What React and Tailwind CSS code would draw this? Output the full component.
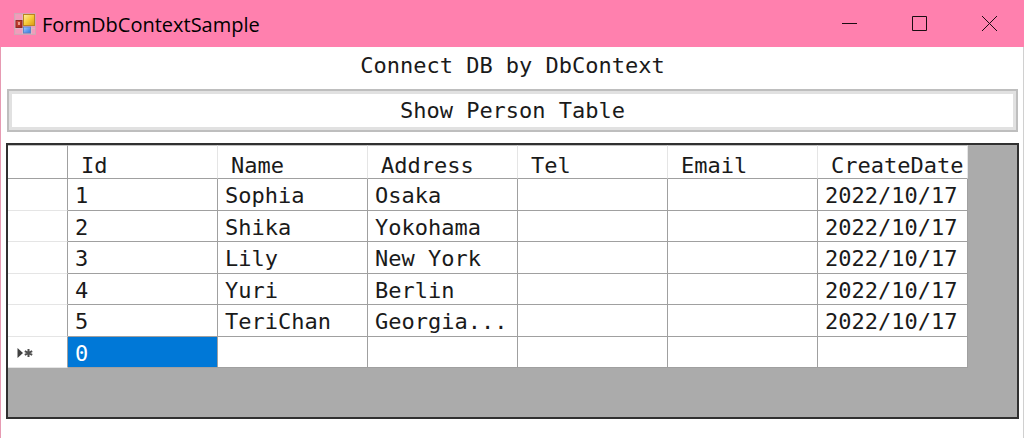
const columns = ["Id", "Name", "Address", "Tel", "Email", "CreateDate"];

const people = [
  ["1", "Sophia", "Osaka", "", "", "2022/10/17"],
  ["2", "Shika", "Yokohama", "", "", "2022/10/17"],
  ["3", "Lily", "New York", "", "", "2022/10/17"],
  ["4", "Yuri", "Berlin", "", "", "2022/10/17"],
  ["5", "TeriChan", "Georgia...", "", "", "2022/10/17"],
];

function FormIcon() {
  return (
    <svg width="22" height="22" viewBox="0 0 22 22" aria-hidden="true">
      <defs>
        <linearGradient id="gold" x1="0" y1="0" x2="1" y2="1">
          <stop offset="0" stopColor="#fff0a0" />
          <stop offset="0.5" stopColor="#f7cb3c" />
          <stop offset="1" stopColor="#d99a10" />
        </linearGradient>
        <linearGradient id="brick" x1="0" y1="0" x2="1" y2="1">
          <stop offset="0" stopColor="#d8503c" />
          <stop offset="1" stopColor="#9c2018" />
        </linearGradient>
        <linearGradient id="sky" x1="0" y1="0" x2="1" y2="1">
          <stop offset="0" stopColor="#a4ccff" />
          <stop offset="1" stopColor="#2f74dc" />
        </linearGradient>
      </defs>
      <rect x="0.5" y="0.5" width="21" height="21" fill="#e6a3ba" stroke="#d3a5b4" />
      <path d="M2 2h6v4H2zM2 16h6v4H2zM18 14h3v6h-3z" fill="#f49abb" />
      <path d="M8.5 1v20M1 15.5h20M1 7.5h8M17.500 14v7" stroke="#dcb6c4" fill="none" />
      <rect x="9.500" y="1.500" width="11" height="11" fill="url(#gold)" stroke="#bb8420" />
      <rect x="2" y="7.500" width="6" height="7" fill="url(#brick)" stroke="#8e2a25" />
      <rect x="4" y="9" width="2" height="3" fill="#e99a88" />
      <rect x="9.500" y="14" width="7" height="6" fill="url(#sky)" stroke="#5f86c6" />
    </svg>
  );
}

function TitleBar() {
  return (
    <header className="flex h-[47px] shrink-0 items-center bg-[#ff80ae] pl-3.5 text-black">
      <FormIcon />
      <h1 className="ml-1.5 flex-1 pt-0.5 font-['Open_Sans',sans-serif] text-xl">FormDbContextSample</h1>
      <div className="flex h-full">
        <button type="button" aria-label="Minimize" className="flex w-[70px] items-center justify-center">
          <svg width="15" height="15" viewBox="0 0 15 15" stroke="#1a0c12" fill="none">
            <path d="M0 7.500h15" />
          </svg>
        </button>
        <button type="button" aria-label="Maximize" className="flex w-[70px] items-center justify-center">
          <svg width="15" height="15" viewBox="0 0 15 15" stroke="#1a0c12" fill="none">
            <path d="M.5.5h14v14H.5z" />
          </svg>
        </button>
        <button type="button" aria-label="Close" className="flex w-[70px] items-center justify-center">
          <svg width="15" height="15" viewBox="0 0 15 15" stroke="#1a0c12" fill="none">
            <path d="M0 0l15 15M15 0L0 15" />
          </svg>
        </button>
      </div>
    </header>
  );
}

function RowHeader({ children }) {
  return (
    <th scope="row" className="border-r border-b border-r-[#a0a0a0] border-b-[#e5e5e5] bg-white pt-0.5 pl-2">
      {children}
    </th>
  );
}

function PersonTable() {
  return (
    <table className="w-[960px] table-fixed border-separate border-spacing-0 bg-white text-left leading-6">
      <colgroup>
        <col className="w-[60px]" />
        {columns.map((name) => (
          <col key={name} className="w-[150px]" />
        ))}
      </colgroup>
      <thead>
        <tr className="h-[34px]">
          <td className="border-t border-r border-b border-t-[#c0c0c0] border-r-[#a0a0a0] border-b-[#a0a0a0]" />
          {columns.map((name) => (
            <th
              key={name}
              scope="col"
              className="border-t border-r border-b border-t-[#c0c0c0] border-r-[#e5e5e5] border-b-[#a0a0a0] pt-2 pl-[13px] font-normal whitespace-nowrap"
            >
              {name}
            </th>
          ))}
        </tr>
      </thead>
      <tbody>
        {people.map((person) => (
          <tr key={person[0]} className="odd:h-8 even:h-[31px]">
            <RowHeader />
            {person.map((value, i) => (
              <td key={columns[i]} className="border-r border-b border-[#a0a0a0] pt-[3px] pl-[7px] whitespace-nowrap">
                {value}
              </td>
            ))}
          </tr>
        ))}
        <tr className="h-[31px]">
          <RowHeader>
            <svg width="18" height="12" viewBox="0 0 18 12" role="img" aria-label="New row">
              <path d="M1.500 1v10l5.500-5z" fill="#404040" />
              <path d="M12.500 2v8M8.800 4.200l7.400 3.600M16.200 4.200L8.800 7.800" stroke="#505050" strokeWidth="2" />
            </svg>
          </RowHeader>
          <td className="border-r border-b border-[#a0a0a0] bg-[#0078d7] pt-[3px] pl-[7px] text-white">0</td>
          {columns.slice(1).map((name) => (
            <td key={name} className="border-r border-b border-[#a0a0a0]" />
          ))}
        </tr>
      </tbody>
    </table>
  );
}

export default function App() {
  return (
    <div className="flex h-screen flex-col bg-white font-['DejaVu_Sans_Mono',monospace] text-[22px] text-[#1a1a1a]">
      <TitleBar />
      <main className="flex min-h-0 flex-1 flex-col border-r border-l border-r-[#d0d0d0] border-l-[#e69ab2] pr-1 pb-[19px] pl-[5px]">
        <p className="h-[42px] text-center leading-[38px]">Connect DB by DbContext</p>
        <button
          type="button"
          className="mr-px ml-px h-[43px] shrink-0 border-2 border-[#bebebe] bg-white leading-8 ring-3 ring-[#e1e1e1] ring-inset"
        >
          Show Person Table
        </button>
        <div className="mt-[11px] min-h-0 flex-1 overflow-hidden border-2 border-[#303030] bg-[#ababab]">
          <PersonTable />
        </div>
      </main>
    </div>
  );
}
